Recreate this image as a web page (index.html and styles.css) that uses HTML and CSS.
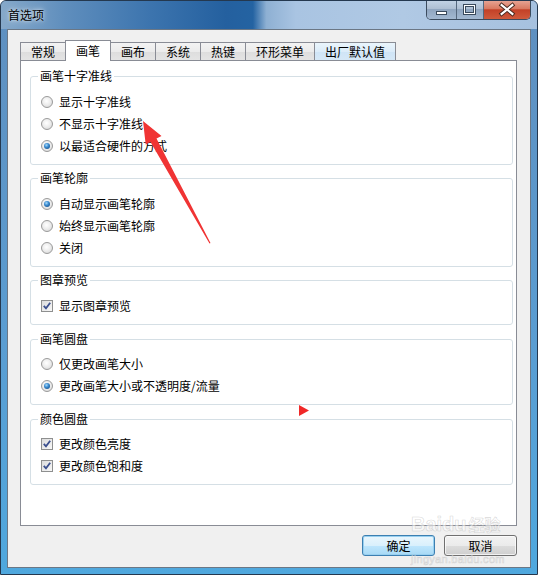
FILE: index.html
```html
<!DOCTYPE html>
<html lang="zh-CN">
<head>
<meta charset="utf-8">
<title>首选项</title>
<link rel="stylesheet" href="styles.css">
</head>
<body>
<div class="window">
  <div class="titlebar">
    <span class="title">首选项</span>
    <div class="caption">
      <div class="cbtn cmin"><svg width="29" height="19" viewBox="0 0 29 19"><rect x="9.5" y="11.5" width="10" height="3" fill="#fff" stroke="#3a4a5c"/></svg></div>
      <div class="cbtn cmax"><svg width="26" height="19" viewBox="0 0 26 19"><rect x="7.5" y="5.5" width="10" height="8" fill="none" stroke="#3a4a5c" stroke-width="3"/><rect x="7.5" y="5.5" width="10" height="8" fill="none" stroke="#fff" stroke-width="1"/></svg></div>
      <div class="cbtn cclose"><svg width="47" height="19" viewBox="0 0 47 19"><path d="M18 5 L29 14 M29 5 L18 14" stroke="#4a2a20" stroke-width="4.2" stroke-linecap="square"/><path d="M18 5 L29 14 M29 5 L18 14" stroke="#fff" stroke-width="2.2" stroke-linecap="square"/></svg></div>
    </div>
  </div>
  <div class="client">
    <div class="tabs">
      <div class="tab">常规</div>
      <div class="tab active">画笔</div>
      <div class="tab">画布</div>
      <div class="tab">系统</div>
      <div class="tab">热键</div>
      <div class="tab">环形菜单</div>
      <div class="tab hover">出厂默认值</div>
    </div>
    <div class="panel">
      <div class="group">
        <span class="gtitle">画笔十字准线</span>
        <div class="row"><span class="radio"></span>显示十字准线</div>
        <div class="row"><span class="radio"></span>不显示十字准线</div>
        <div class="row"><span class="radio on"></span>以最适合硬件的方式</div>
      </div>
      <div class="group">
        <span class="gtitle">画笔轮廓</span>
        <div class="row"><span class="radio on"></span>自动显示画笔轮廓</div>
        <div class="row"><span class="radio"></span>始终显示画笔轮廓</div>
        <div class="row"><span class="radio"></span>关闭</div>
      </div>
      <div class="group gap14">
        <span class="gtitle">图章预览</span>
        <div class="row"><span class="check"><svg width="10" height="10" viewBox="0 0 10 10"><path d="M1.8 4.8 L4 7.4 L8.2 1.8" fill="none" stroke="#3b4f8e" stroke-width="1.8"/></svg></span>显示图章预览</div>
      </div>
      <div class="group g2 gap14">
        <span class="gtitle">画笔圆盘</span>
        <div class="row"><span class="radio"></span>仅更改画笔大小</div>
        <div class="row"><span class="radio on"></span>更改画笔大小或不透明度/流量</div>
      </div>
      <div class="group g2">
        <span class="gtitle">颜色圆盘</span>
        <div class="row"><span class="check"><svg width="10" height="10" viewBox="0 0 10 10"><path d="M1.8 4.8 L4 7.4 L8.2 1.8" fill="none" stroke="#3b4f8e" stroke-width="1.8"/></svg></span>更改颜色亮度</div>
        <div class="row"><span class="check"><svg width="10" height="10" viewBox="0 0 10 10"><path d="M1.8 4.8 L4 7.4 L8.2 1.8" fill="none" stroke="#3b4f8e" stroke-width="1.8"/></svg></span>更改颜色饱和度</div>
      </div>
    </div>
    <div class="buttons">
      <div class="btn default">确定</div>
      <div class="btn">取消</div>
    </div>
  </div>
  <svg class="annot" width="538" height="575" viewBox="0 0 538 575">
    <polygon points="143,121 161.5,136 156.5,138.5 210.5,243 209.5,243.5 150.5,142 145.7,144.6" fill="#f03434"/>
    <polygon points="299,405 309,410.5 299,416" fill="#f02828"/>
  </svg>
  <div class="watermark">
    <div class="wm-line">Baidu<span class="wm-cn">经验</span></div>
    <div class="wm-url">jingyan.baidu.com</div>
  </div>
</div>
</body>
</html>
```

FILE: styles.css
```css
html, body {
  margin: 0;
  padding: 0;
}
body {
  width: 538px;
  height: 575px;
  overflow: hidden;
  font-family: "Noto Sans CJK SC", "Liberation Sans", sans-serif;
  font-size: 12px;
  color: #000;
}
.window {
  position: relative;
  width: 538px;
  height: 575px;
  box-sizing: border-box;
  border: 1px solid #24384f;
  border-radius: 6px 6px 0 0;
  background: linear-gradient(to bottom, #5f8fbf 0%, #5a9dd2 60%, #4fa8de 100%);
  display: flex;
  flex-direction: column;
  overflow: hidden;
}
.titlebar {
  height: 28px;
  flex: none;
  display: flex;
  justify-content: space-between;
  align-items: flex-start;
  background: linear-gradient(to right, #86a9ca 0%, #5f8ebd 12%, #3c74ae 28%, #24609f 42%, #2463a2 47%, #8eb0d3 49.5%, #a9c4e2 55%, #b0c9e4 75%, #a6c1df 100%);
}
.title {
  margin: 6px 0 0 7px;
  line-height: 16px;
  font-size: 12px;
  color: #000;
  text-shadow: 0 0 6px rgba(255,255,255,0.8), 0 0 3px rgba(255,255,255,0.6);
}
.caption {
  display: flex;
  margin: -1px 6px 0 0;
  border: 1px solid #3b4b5e;
  border-top: none;
  border-radius: 0 0 5px 5px;
  overflow: hidden;
  height: 19px;
}
.cbtn {
  height: 19px;
  display: flex;
}
.cmin {
  width: 29px;
  border-right: 1px solid #55687e;
  background: linear-gradient(to bottom, #c4d5e7 0%, #aebfd3 45%, #90a6c0 50%, #a3b9d2 100%);
}
.cmax {
  width: 26px;
  border-right: 1px solid #55687e;
  background: linear-gradient(to bottom, #c4d5e7 0%, #aebfd3 45%, #90a6c0 50%, #a3b9d2 100%);
}
.cclose {
  width: 46px;
  background: linear-gradient(to bottom, #e8a898 0%, #d97a62 45%, #c34127 52%, #cf5a3c 100%);
}
.client {
  flex: 1;
  margin: 0 6px 6px 6px;
  border: 1px solid #6b7785;
  background: #f0f0f0;
  padding: 10px 13px 0 12px;
  display: flex;
  flex-direction: column;
}
.tabs {
  display: flex;
  align-items: flex-end;
  height: 20px;
  flex: none;
}
.tab {
  height: 18px;
  box-sizing: border-box;
  border: 1px solid #898c95;
  border-bottom: none;
  margin-right: -1px;
  padding: 0 10px;
  line-height: 17px;
  background: linear-gradient(to bottom, #f3f3f3 0%, #ebebeb 50%, #dddddd 51%, #e4e4e4 100%);
  color: #000;
}
.tab.active {
  height: 21px;
  margin-bottom: -1px;
  padding-top: 1px;
  background: #fff;
  position: relative;
  z-index: 1;
}
.tab.hover {
  background: linear-gradient(to bottom, #eaf5fc 0%, #dcecf9 50%, #cfe4f6 51%, #d6e8f7 100%);
}
.panel {
  height: 466px;
  box-sizing: border-box;
  border: 1px solid #898c95;
  background: #fff;
  padding: 15px 3px 0 9px;
  flex: none;
}
.group {
  position: relative;
  border: 1px solid #d5dfe5;
  border-radius: 3px;
  padding: 14px 0 7px 10px;
  margin-bottom: 13px;
}
.group.gap14 {
  margin-bottom: 14px;
}
.group.g2 {
  padding-top: 13px;
}
.gtitle {
  position: absolute;
  top: -8px;
  left: 7px;
  padding: 0 2px;
  background: #fff;
  line-height: 14px;
}
.row {
  height: 22px;
  display: flex;
  align-items: center;
  gap: 6px;
  line-height: 14px;
}
.radio {
  width: 12px;
  height: 12px;
  box-sizing: border-box;
  border-radius: 50%;
  border: 1px solid #9a9a9a;
  background: radial-gradient(circle at 45% 40%, #ffffff 0%, #eeeeee 45%, #d0d0d0 100%);
  position: relative;
  flex: none;
}
.radio.on::after {
  content: "";
  position: absolute;
  left: 2px;
  top: 2px;
  width: 6px;
  height: 6px;
  border-radius: 50%;
  background: radial-gradient(circle at 40% 35%, #a8dcfb 0%, #3b8bd0 40%, #0c3d72 100%);
}
.check {
  width: 12px;
  height: 12px;
  box-sizing: border-box;
  border: 1px solid #8e8f8f;
  background: linear-gradient(to bottom right, #dcdcdc, #f8f8f8);
  display: flex;
  align-items: center;
  justify-content: center;
  flex: none;
}
.buttons {
  display: flex;
  justify-content: flex-end;
  gap: 9px;
  margin-top: 9px;
}
.btn {
  width: 73px;
  height: 21px;
  box-sizing: border-box;
  border: 1px solid #707070;
  border-radius: 3px;
  background: linear-gradient(to bottom, #f2f2f2 0%, #ebebeb 50%, #dddddd 51%, #cfcfcf 100%);
  display: flex;
  align-items: center;
  justify-content: center;
  line-height: 14px;
  box-shadow: inset 0 0 0 1px rgba(255,255,255,0.7);
}
.btn.default {
  border-color: #3c7fb1;
  background: linear-gradient(to bottom, #eaf6fd 0%, #d9f0fc 50%, #bee6fd 51%, #a7d9f5 100%);
  box-shadow: inset 0 0 0 1px #98d0f0;
}
.annot {
  position: absolute;
  left: -1px;
  top: -1px;
  pointer-events: none;
}
.watermark {
  position: absolute;
  left: 410px;
  top: 512px;
  width: 110px;
  color: rgba(255,255,255,0.55);
  -webkit-text-stroke: 0.6px rgba(170,170,170,0.45);
  font-family: "Liberation Sans", sans-serif;
  pointer-events: none;
}
.wm-line {
  font-size: 20px;
  font-weight: bold;
  line-height: 22px;
  white-space: nowrap;
}
.wm-cn {
  font-family: "Noto Sans CJK SC", sans-serif;
  font-size: 16px;
  margin-left: 2px;
}
.wm-url {
  font-size: 11px;
  line-height: 12px;
  margin-top: 18px;
  letter-spacing: 0.3px;
}
```
